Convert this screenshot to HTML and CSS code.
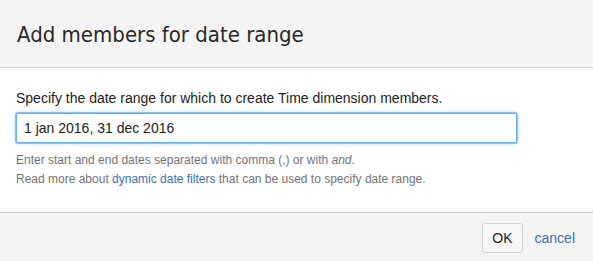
FILE: index.html
```html
<!DOCTYPE html>
<html>
<head>
<meta charset="utf-8">
<link rel="stylesheet" href="styles.css">
</head>
<body>
<div class="modal">
  <div class="modal-header">
    <h4 class="modal-title">Add members for date range</h4>
  </div>
  <div class="modal-body">
    <label class="label" for="range">Specify the date range for which to create Time dimension members.</label>
    <input id="range" class="input" type="text" value="1 jan 2016, 31 dec 2016">
    <div class="help">Enter start and end dates separated with comma (,) or with <em>and</em>.</div>
    <div class="help">Read more about <a href="#" class="link">dynamic date filters</a> that can be used to specify date range.</div>
  </div>
  <div class="modal-footer">
    <button class="btn" type="button">OK</button>
    <a href="#" class="link cancel">cancel</a>
  </div>
</div>
</body>
</html>
```
FILE: styles.css
```css
html, body {
  margin: 0;
  padding: 0;
  background: #fff;
}
body {
  font-family: "Liberation Sans", Arial, sans-serif;
  color: #333;
}
.modal {
  width: 593px;
  height: 261px;
  display: flex;
  flex-direction: column;
}
.modal-header {
  height: 67px;
  background: #f4f4f4;
  border-bottom: 1px solid #d4d4d4;
  display: flex;
  align-items: center;
  padding: 0 17px;
  box-sizing: content-box;
}
.modal-title {
  margin: 0;
  font-family: "Liberation Sans Narrow", "DejaVu Sans Condensed", "Open Sans", sans-serif;
  font-weight: normal;
  font-size: 22px;
  color: #2a2a2a;
  padding-top: 1px;
}
.modal-body {
  flex: 1;
  padding: 20px 16px 0;
  display: flex;
  flex-direction: column;
}
.label {
  font-size: 14px;
  line-height: 20px;
  color: #222;
  margin-bottom: 5px;
}
.input {
  width: 501px;
  height: 30px;
  box-sizing: border-box;
  border: 1px solid #66afe9;
  border-radius: 2px;
  box-shadow: 0 0 0 1px #8cc3f2, 0 0 4px rgba(102,175,233,0.7);
  outline: none;
  padding: 0 7px;
  font-family: "Liberation Sans", Arial, sans-serif;
  font-size: 14px;
  color: #222;
  margin-bottom: 8px;
}
.help {
  font-size: 12px;
  line-height: 19px;
  color: #737373;
}
.link {
  color: #3a70b8;
  text-decoration: none;
}
.modal-footer {
  height: 48px;
  background: #f4f4f4;
  border-top: 1px solid #d0d0d0;
  display: flex;
  align-items: center;
  justify-content: flex-end;
  padding: 0 18px 0 0;
}
.btn {
  height: 30px;
  padding: 0 9px;
  background: #f7f7f7;
  border: 1px solid #d3d3d3;
  border-radius: 3px;
  font-family: "Liberation Sans", Arial, sans-serif;
  font-size: 14px;
  color: #222;
  margin-right: 12px;
  margin-top: 2px;
}
.cancel {
  font-size: 14px;
  margin-top: 2px;
}
```
